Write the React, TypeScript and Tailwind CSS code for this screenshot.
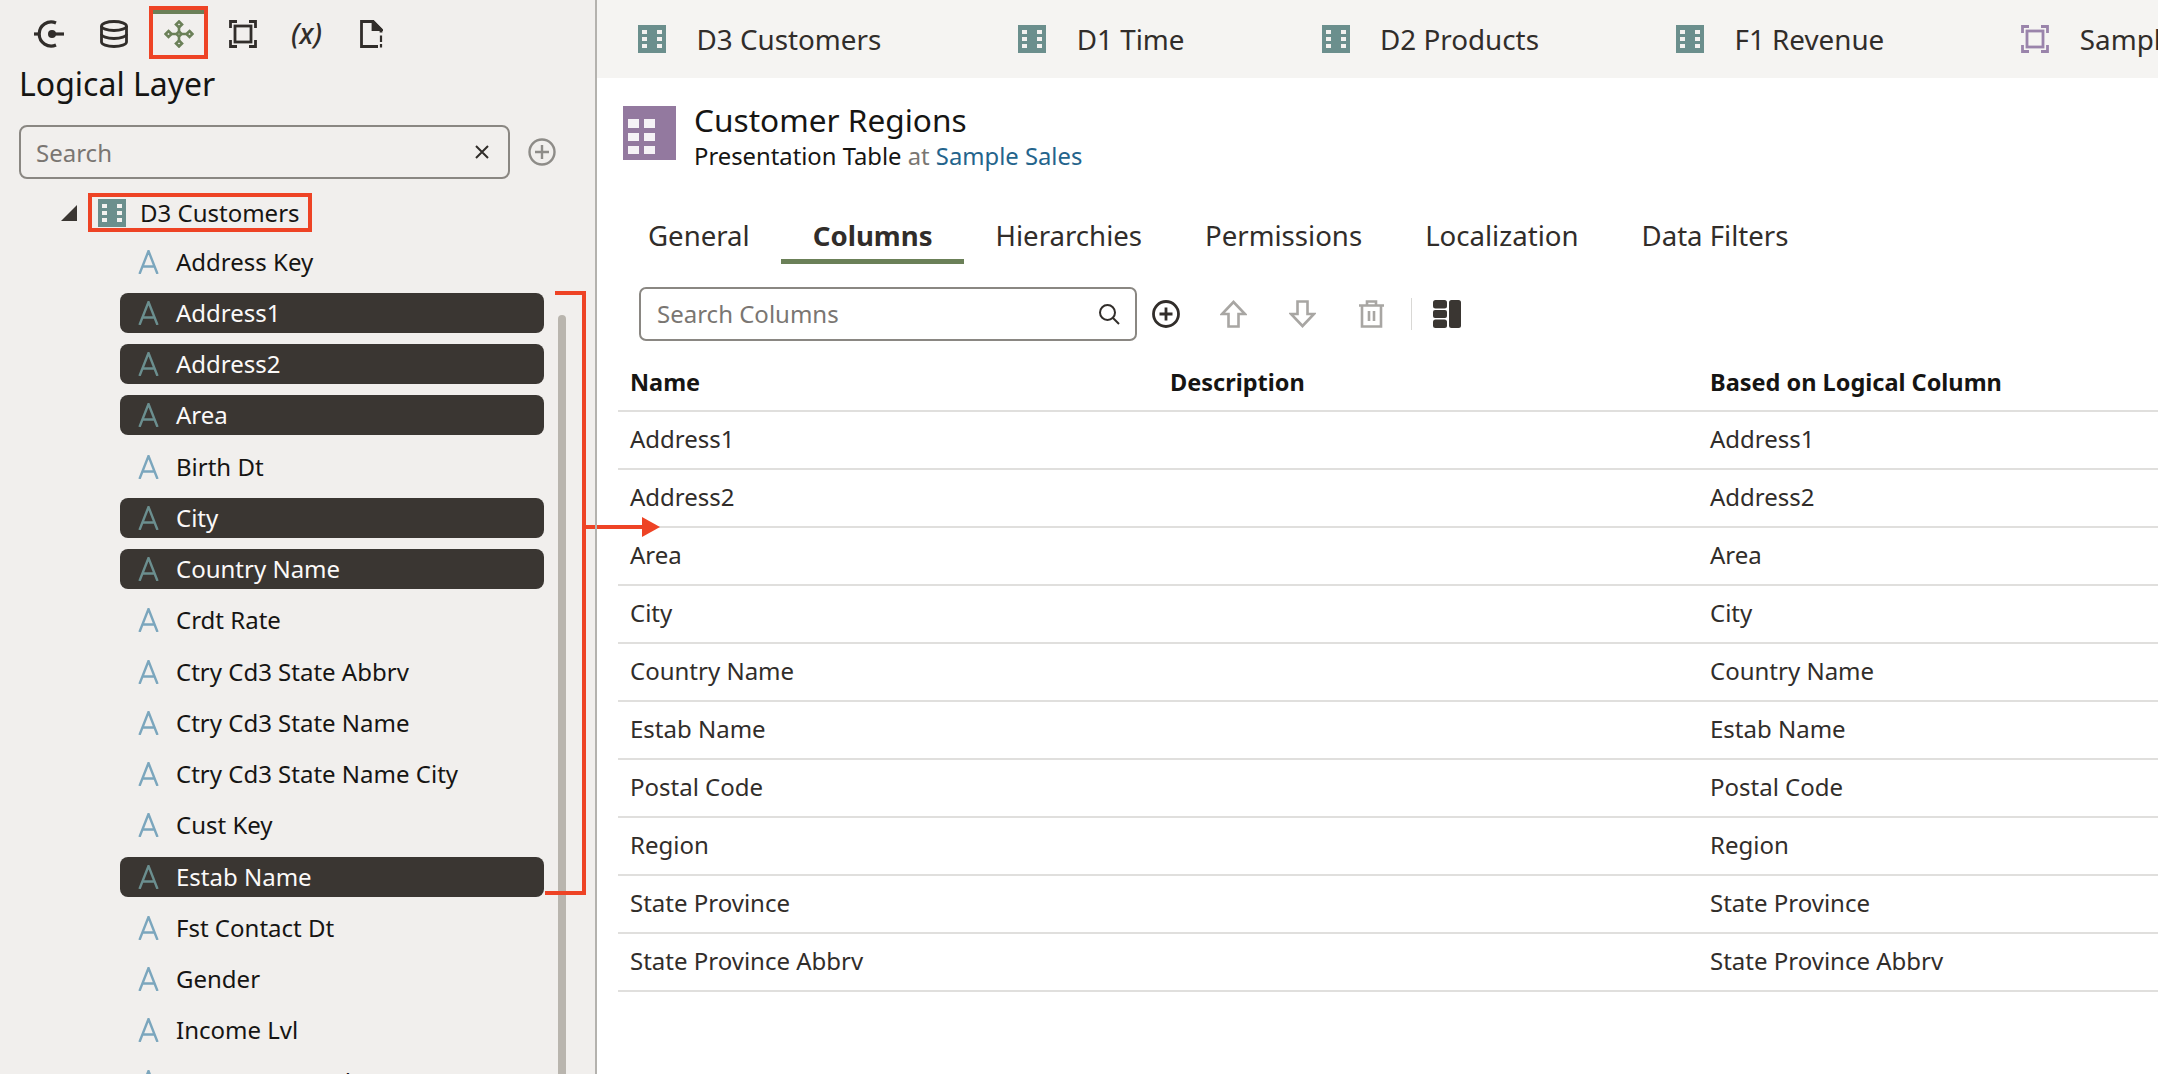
const FONT = "font-['Noto_Sans',sans-serif]";

function DimIcon({ size = 28 }: { size?: number }) {
  return (
    <svg width={size} height={size} viewBox="0 0 28 28" className="shrink-0">
      <rect width="28" height="28" fill="#6b8f8d" />
      <g fill="#f3f2f0">
        <rect x="4" y="5" width="5" height="4" />
        <rect x="4" y="12" width="5" height="4" />
        <rect x="4" y="19" width="5" height="4" />
        <rect x="19" y="5" width="5" height="4" />
        <rect x="19" y="12" width="5" height="4" />
        <rect x="19" y="19" width="5" height="4" />
      </g>
    </svg>
  );
}

function FrameIcon({ color }: { color: string }) {
  return (
    <svg width="28" height="28" viewBox="0 0 28 28" fill="none" stroke={color} strokeWidth="2.8" className="shrink-0">
      <path d="M1.5 8V1.5H8M20 1.5h6.5V8M26.5 20v6.5H20M8 26.5H1.5V20" />
      <rect x="6" y="6" width="16" height="16" />
    </svg>
  );
}

function AttrIcon({ dark }: { dark?: boolean }) {
  return (
    <svg width="21" height="24" viewBox="0 0 21 24" fill="none" stroke={dark ? "#6b8f8f" : "#7ba6bd"} strokeWidth="2.4" className="shrink-0">
      <path d="M1.5 24L10.5 1l9 23M4.5 16.5h12" />
    </svg>
  );
}

function TopTab({ label, frame }: { label: string; frame?: boolean }) {
  return (
    <div className="flex items-center gap-[30.5px] shrink-0">
      {frame ? <FrameIcon color="#9a84ab" /> : <DimIcon />}
      <span className="text-[27.8px] leading-[36px] text-[#312d2a] whitespace-nowrap">{label}</span>
    </div>
  );
}

const attrs: [string, boolean][] = [
  ["Address Key", false],
  ["Address1", true],
  ["Address2", true],
  ["Area", true],
  ["Birth Dt", false],
  ["City", true],
  ["Country Name", true],
  ["Crdt Rate", false],
  ["Ctry Cd3 State Abbrv", false],
  ["Ctry Cd3 State Name", false],
  ["Ctry Cd3 State Name City", false],
  ["Cust Key", false],
  ["Estab Name", true],
  ["Fst Contact Dt", false],
  ["Gender", false],
  ["Income Lvl", false],
  ["Int Current Code Dr", false],
];

const rows = [
  "Address1",
  "Address2",
  "Area",
  "City",
  "Country Name",
  "Estab Name",
  "Postal Code",
  "Region",
  "State Province",
  "State Province Abbrv",
];

const tabs = ["General", "Columns", "Hierarchies", "Permissions", "Localization", "Data Filters"];

function Sidebar() {
  return (
    <aside className="relative w-[597px] shrink-0 h-full bg-[#f1efed] border-r-2 border-[#b4b2ae] overflow-hidden">
      <div className="flex items-start h-[59px]">
        <div className="ml-[34px] mt-[20px] w-[30px]">
          <svg width="30" height="28" viewBox="0 0 30 28" fill="none" stroke="#312d2a" strokeWidth="3.2">
            <path d="M22 3A12 12 0 1 0 22 25" />
            <path d="M0 14h6" />
            <path d="M18 14h12" />
            <circle cx="18" cy="14" r="4" fill="#312d2a" stroke="none" />
          </svg>
        </div>
        <div className="ml-[36px] mt-[20px]">
          <svg width="28" height="28" viewBox="0 0 28 28" fill="none" stroke="#312d2a" strokeWidth="2.8">
            <ellipse cx="14" cy="6" rx="12.5" ry="4.5" />
            <path d="M1.5 6v16c0 2.5 5.5 4.5 12.5 4.5s12.5-2 12.5-4.5V6" />
            <path d="M1.5 14c0 2.5 5.5 4.5 12.5 4.5s12.5-2 12.5-4.5" />
          </svg>
        </div>
        <div className="ml-[21px] mt-[6px] w-[59px] h-[53px] border-[4px] border-[#ee4325] flex flex-col items-center shrink-0">
          <div className="w-full h-[4px] bg-[#6b8058]" />
          <svg className="mt-[6px]" width="30" height="28" viewBox="0 0 30 28" fill="none" stroke="#6b8058" strokeWidth="2.6">
            <path d="M15 7V21M7 14h16" />
            <path d="M15 1.5l3 3-3 3-3-3zM15 20.5l3 3-3 3-3-3zM4.5 11l3 3-3 3-3-3zM25.5 11l3 3-3 3-3-3z" />
            <path d="M15 11.5l2.5 2.5-2.5 2.5-2.5-2.5z" fill="#f1efed" />
          </svg>
        </div>
        <div className="ml-[21px] mt-[20px]">
          <FrameIcon color="#312d2a" />
        </div>
        <div className="ml-[34px] mt-[15px] text-[28px] leading-[36px] italic text-[#312d2a] font-medium">(x)</div>
        <div className="ml-[38px] mt-[20px]">
          <svg width="23" height="28" viewBox="0 0 23 28" fill="none" stroke="#312d2a" strokeWidth="2.8">
            <path d="M18 26.5H1.5V1.5H13l8 8v3" />
            <path d="M13 1.5V9.5h8z" fill="#312d2a" />
            <path d="M21 15.5v6.5M21 24v3.5" strokeWidth="2.2" />
          </svg>
        </div>
      </div>
      <h1 className="ml-[19px] mt-[5px] text-[32px] leading-[40px] text-[#161513]">Logical Layer</h1>
      <div className="flex items-center mt-[21px] ml-[19px]">
        <div className="w-[491px] h-[54px] border-2 border-[#8a8782] rounded-[8px] flex items-center pl-[15px] pr-[18px] justify-between">
          <span className="text-[24px] leading-[36px] mt-[2px] text-[#7a7672]">Search</span>
          <svg width="16" height="16" viewBox="0 0 16 16" stroke="#312d2a" strokeWidth="2">
            <path d="M2 2l12 12M14 2L2 14" />
          </svg>
        </div>
        <svg className="ml-[18px]" width="28" height="28" viewBox="0 0 28 28" fill="none" stroke="#8e8c88" strokeWidth="2.4">
          <circle cx="14" cy="14" r="12.5" />
          <path d="M14 7v14M7 14h14" />
        </svg>
      </div>
      <div className="flex items-center mt-[14px] h-[39px]">
        <div className="ml-[61px] w-0 h-0 border-l-[16px] border-l-transparent border-b-[16px] border-b-[#3a3632]" />
        <div className="ml-[11px] w-[224px] h-[39px] border-[4px] border-[#ee4325] flex items-center pl-[6px] gap-[14px] shrink-0">
          <DimIcon />
          <span className="text-[24px] text-[#161513] whitespace-nowrap">D3 Customers</span>
        </div>
      </div>
      <div className="ml-[120px] w-[424px] mt-[9.5px] flex flex-col">
        {attrs.map(([name, sel]) => (
          <div
            key={name}
            className={`h-[40px] mb-[11.27px] shrink-0 rounded-[8px] flex items-center gap-[17px] pl-[18px] ${sel ? "bg-[#3a3632] text-[#fbf9f8]" : "text-[#161513]"}`}
          >
            <AttrIcon dark={sel} />
            <span className="text-[24px] whitespace-nowrap">{name}</span>
          </div>
        ))}
      </div>
      <div className="absolute left-[558px] top-[315px] bottom-0 w-[8px] rounded-t-full bg-[#b9b5ae]" />
      <div className="absolute left-[555px] top-[291px] w-[30px] h-[4px] bg-[#ee4325]" />
      <div className="absolute left-[582px] top-[291px] w-[4px] h-[604px] bg-[#ee4325]" />
      <div className="absolute left-[545px] top-[891px] w-[41px] h-[4px] bg-[#ee4325]" />
      <div className="absolute left-[582px] top-[525px] w-[15px] h-[4px] bg-[#ee4325]" />
    </aside>
  );
}

function Main() {
  return (
    <main className="relative flex-1 min-w-0 h-full bg-white overflow-hidden">
      <div className="h-[78px] bg-[#f5f4f2] flex items-center pl-[41px] gap-[137px] overflow-hidden">
        <TopTab label="D3 Customers" />
        <TopTab label="D1 Time" />
        <TopTab label="D2 Products" />
        <TopTab label="F1 Revenue" />
        <TopTab label="Sample Sales" frame />
      </div>
      <div className="flex items-start ml-[26px] mt-[28px] h-[70px]">
        <svg width="53" height="54" viewBox="0 0 53 54" className="shrink-0">
          <rect width="53" height="54" fill="#93799f" />
          <g fill="#f5f2f6">
            <rect x="5" y="13" width="11" height="9" /><rect x="21" y="13" width="11" height="9" />
            <rect x="5" y="27" width="11" height="8" /><rect x="21" y="27" width="11" height="8" />
            <rect x="5" y="40" width="11" height="8" /><rect x="21" y="40" width="11" height="8" />
          </g>
        </svg>
        <div className="ml-[18px] -mt-[5px]">
          <div className="text-[31.6px] leading-[38px] text-[#161513]">Customer Regions</div>
          <div className="text-[23.8px] leading-[34px] text-[#161513]">
            Presentation Table <span className="text-[#7a7672]">at</span> <span className="text-[#24648c]">Sample Sales</span>
          </div>
        </div>
      </div>
      <div className="flex ml-[19.5px] mt-[36px] h-[58px] items-start">
        {tabs.map((t) => (
          <div
            key={t}
            className={`h-[52px] px-[31.5px] pb-[2px] flex items-center text-[27.6px] leading-[36px] whitespace-nowrap border-b-[5px] ${t === "Columns" ? "font-bold text-[#312d2a] border-[#6b8058]" : "text-[#312d2a] border-transparent"}`}
          >
            {t}
          </div>
        ))}
      </div>
      <div className="flex items-center ml-[42px] mt-[17px] h-[54px]">
        <div className="w-[498px] h-[54px] border-2 border-[#8a8782] rounded-[7px] flex items-center justify-between pl-[16px] pr-[15px] shrink-0">
          <span className="text-[24px] text-[#7a7672]">Search Columns</span>
          <svg width="22" height="22" viewBox="0 0 22 22" fill="none" stroke="#312d2a" strokeWidth="2">
            <circle cx="9.5" cy="9.5" r="7.5" />
            <path d="M15 15l6 6" />
          </svg>
        </div>
        <svg className="ml-[15px]" width="28" height="28" viewBox="0 0 28 28" fill="none" stroke="#312d2a" strokeWidth="2.8">
          <circle cx="14" cy="14" r="12.5" />
          <path d="M14 7.5v13M7.5 14h13" />
        </svg>
        <svg className="ml-[40px]" width="27" height="28" viewBox="0 0 27 28" fill="none" stroke="#a8a6a3" strokeWidth="2.6">
          <path d="M13.5 2L25 14h-6.5v12.5h-10V14H2z" />
        </svg>
        <svg className="ml-[42px]" width="27" height="28" viewBox="0 0 27 28" fill="none" stroke="#a8a6a3" strokeWidth="2.6">
          <path d="M13.5 26L25 14h-6.5V1.5h-10V14H2z" />
        </svg>
        <svg className="ml-[42px]" width="27" height="28" viewBox="0 0 27 28" fill="none" stroke="#a8a6a3" strokeWidth="2.6">
          <path d="M1 5.5h25M9 5.5V1.5h9v4M4 5.5v21h19v-21M11 11v10M16 11v10" />
        </svg>
        <div className="ml-[26px] w-[1px] h-[32px] bg-[#d9d8d5]" />
        <svg className="ml-[21px]" width="28" height="28" viewBox="0 0 28 28" fill="#3a3632">
          <rect x="0" y="0" width="14" height="8.5" rx="2.5" />
          <rect x="0" y="10" width="14" height="8" rx="2" />
          <rect x="0" y="19.5" width="14" height="8.5" rx="2.5" />
          <rect x="16" y="0" width="12" height="28" rx="2.5" />
        </svg>
      </div>
      <div className="ml-[21px] mt-[13px]">
        <div className="grid grid-cols-[540px_540px_1fr] h-[58px] items-center border-b-2 border-[#e0dfdd] pl-[12px] pt-[1px] text-[23.5px] font-bold text-[#161513]">
          <span>Name</span>
          <span>Description</span>
          <span>Based on Logical Column</span>
        </div>
        {rows.map((r) => (
          <div key={r} className="grid grid-cols-[540px_540px_1fr] h-[58px] items-center border-b-2 border-[#e0dfdd] pl-[12px] pb-[2px] text-[24px] text-[#312d2a]">
            <span>{r}</span>
            <span />
            <span>{r}</span>
          </div>
        ))}
      </div>
      <div className="absolute left-0 top-[525px] w-[46px] h-[4px] bg-[#ee4325]" />
      <div className="absolute left-[45px] top-[517px] w-0 h-0 border-y-[10px] border-y-transparent border-l-[18px] border-l-[#ee4325]" />
    </main>
  );
}

export default function App() {
  return (
    <div className={`flex w-[2158px] h-[1074px] overflow-hidden ${FONT}`}>
      <Sidebar />
      <Main />
    </div>
  );
}
